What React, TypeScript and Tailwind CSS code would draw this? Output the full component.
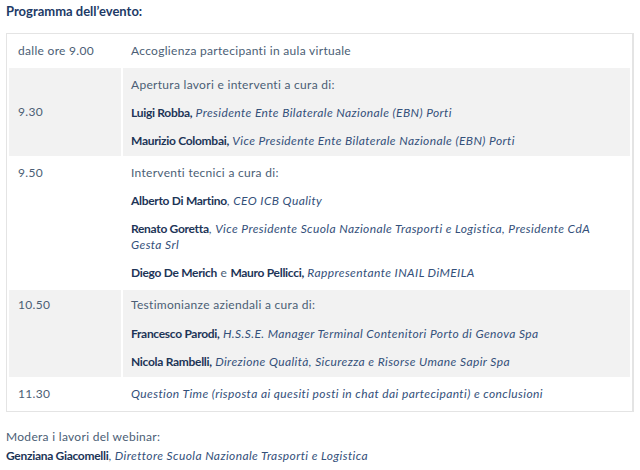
const B = ({ children }: { children: React.ReactNode }) => (
  <b className="font-bold text-[#1d3557] tracking-[-0.3px]">{children}</b>
);
const I = ({ children }: { children: React.ReactNode }) => (
  <i className="text-[#34507a] tracking-[0.4px]">{children}</i>
);

const rows: { time: string; gray: boolean; mid?: boolean; body: React.ReactNode }[] = [
  {
    time: 'dalle ore 9.00',
    gray: false,
    body: <p>Accoglienza partecipanti in aula virtuale</p>,
  },
  {
    time: '9.30',
    gray: true,
    mid: true,
    body: (
      <>
        <p className="mb-3 mt-[2px]">Apertura lavori e interventi a cura di:</p>
        <p className="mb-3">
          <B>Luigi Robba,</B> <I>Presidente Ente Bilaterale Nazionale (EBN) Porti</I>
        </p>
        <p>
          <B>Maurizio Colombai,</B> <I>Vice Presidente Ente Bilaterale Nazionale (EBN) Porti</I>
        </p>
      </>
    ),
  },
  {
    time: '9.50',
    gray: false,
    body: (
      <>
        <p className="mb-3">Interventi tecnici a cura di:</p>
        <p className="mb-3">
          <B>Alberto Di Martino</B>, <I>CEO ICB Quality</I>
        </p>
        <p className="mb-3">
          <B>Renato Goretta</B>,{' '}
          <I>Vice Presidente Scuola Nazionale Trasporti e Logistica, Presidente CdA Gesta Srl</I>
        </p>
        <p>
          <B>Diego De Merich</B> e <B>Mauro Pellicci,</B> <I>Rappresentante INAIL DiMEILA</I>
        </p>
      </>
    ),
  },
  {
    time: '10.50',
    gray: true,
    body: (
      <>
        <p className="mb-[13px]">Testimonianze aziendali a cura di:</p>
        <p className="mb-3">
          <B>Francesco Parodi,</B> <I>H.S.S.E. Manager Terminal Contenitori Porto di Genova Spa</I>
        </p>
        <p>
          <B>Nicola Rambelli,</B> <I>Direzione Qualità, Sicurezza e Risorse Umane Sapir Spa</I>
        </p>
      </>
    ),
  },
  {
    time: '11.30',
    gray: false,
    body: (
      <p>
        <I>Question Time (risposta ai quesiti posti in chat dai partecipanti) e conclusioni</I>
      </p>
    ),
  },
];

export default function App() {
  return (
    <div className="w-[640px] h-[470px] bg-white px-[6px] pt-[3px] text-[12px] leading-[16px] tracking-[0.3px] text-[#4b5e75] font-['Lato','Liberation_Sans',sans-serif]">
      <h3 className="font-bold text-[13px] tracking-normal text-[#1d3a66] leading-[16px]">Programma dell’evento:</h3>
      <div className="mt-[14px] w-[628px] border border-[#e4e4e4]">
        <table className="w-full border-separate border-spacing-[2px] border-r border-[#e4e4e4]">
          <tbody>
            {rows.map((r) => (
              <tr key={r.time}>
                <td
                  className={`w-[112px] pl-[9px] py-[7px] ${r.mid ? 'align-middle' : 'align-top'} ${
                    r.gray ? 'bg-[#f2f2f2]' : 'bg-white'
                  }`}
                >
                  {r.time}
                </td>
                <td className={`align-top px-2 py-[7px] ${r.gray ? 'bg-[#f2f2f2]' : 'bg-white'}`}>{r.body}</td>
              </tr>
            ))}
          </tbody>
        </table>
      </div>
      <div className="mt-[15px] leading-[19px]">
        <p>Modera i lavori del webinar:</p>
        <p>
          <B>Genziana Giacomelli</B>, <I>Direttore Scuola Nazionale Trasporti e Logistica</I>
        </p>
      </div>
    </div>
  );
}
